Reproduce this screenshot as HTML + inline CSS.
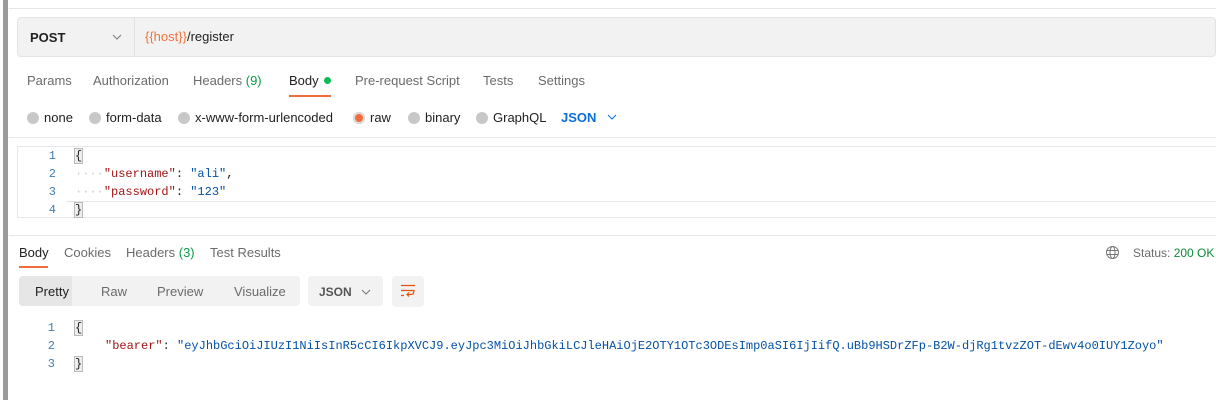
<!DOCTYPE html>
<html><head><meta charset="utf-8"><style>
*{margin:0;padding:0;box-sizing:border-box}
body{width:1216px;height:400px;background:#fff;font-family:"Liberation Sans",sans-serif;font-size:13px;color:#212121;position:relative;overflow:hidden}
.abs{position:absolute;white-space:nowrap}
.g{color:#6b6b6b}
.mono{font-family:"Liberation Mono",monospace;font-size:12px}
.ln{color:#3f7fb0;width:20px;text-align:right}
.k{color:#a31515}.s{color:#0451a5}
.dot{display:inline-block;width:12px;height:12px;border-radius:50%;background:#c8c8c8;vertical-align:-2px;margin-right:5px}
</style></head><body>
<div class="abs" style="left:3px;top:0;width:5px;height:400px;background:#9a9a9a"></div>
<div class="abs" style="left:9px;top:8px;width:1207px;height:1px;background:#e6e6e6"></div>
<div class="abs" style="left:17px;top:17px;width:1199px;height:40px;background:#f2f2f2;border:1px solid #e4e4e4;border-radius:4px"></div>
<div class="abs" style="left:134px;top:18px;width:1px;height:38px;background:#e0e0e0"></div>
<div class="abs" style="left:30px;top:30px;font-weight:bold;font-size:13px">POST</div>
<svg class="abs" style="left:112px;top:33px" width="10" height="8"><path d="M1 2l4 4 4-4" stroke="#777" fill="none"/></svg>
<div class="abs" style="left:145px;top:29px"><span style="color:#f0743e">{{host}}</span>/register</div>

<div class="abs g" style="left:27px;top:73px">Params</div>
<div class="abs g" style="left:93px;top:73px">Authorization</div>
<div class="abs g" style="left:193px;top:73px">Headers <span style="color:#0a9b4a">(9)</span></div>
<div class="abs" style="left:289px;top:73px">Body <span style="display:inline-block;width:7px;height:7px;border-radius:50%;background:#0cbb52;vertical-align:1px;margin-left:2px"></span></div>
<div class="abs" style="left:289px;top:95px;width:42px;height:2px;background:#f26b3a"></div>
<div class="abs g" style="left:355px;top:73px">Pre-request Script</div>
<div class="abs g" style="left:483px;top:73px">Tests</div>
<div class="abs g" style="left:538px;top:73px">Settings</div>

<div class="abs" style="left:27px;top:110px"><span class="dot"></span>none</div>
<div class="abs" style="left:89px;top:110px"><span class="dot"></span>form-data</div>
<div class="abs" style="left:178px;top:110px"><span class="dot"></span>x-www-form-urlencoded</div>
<div class="abs" style="left:353px;top:110px"><span class="dot" style="background:#f26b3a;box-shadow:0 0 0 2px #ddd inset"></span>raw</div>
<div class="abs" style="left:408px;top:110px"><span class="dot"></span>binary</div>
<div class="abs" style="left:476px;top:110px"><span class="dot"></span>GraphQL</div>
<div class="abs" style="left:561px;top:110px;color:#0b6ed6;font-weight:bold">JSON</div>
<svg class="abs" style="left:607px;top:113px" width="10" height="8"><path d="M1 2l4 4 4-4" stroke="#0b6ed6" fill="none"/></svg>
<div class="abs" style="left:9px;top:137px;width:1207px;height:1px;background:#e6e6e6"></div>

<div class="abs" style="left:17px;top:146px;width:1199px;height:72px;border:1px solid #e6e6e6;border-right:none"></div>
<div class="abs" style="left:66px;top:201px;width:1150px;height:1px;background:#e6e6e6"></div>
<div class="abs mono ln" style="left:36px;top:149px">1</div>
<div class="abs mono ln" style="left:36px;top:167px">2</div>
<div class="abs mono ln" style="left:36px;top:185px">3</div>
<div class="abs mono ln" style="left:36px;top:203px">4</div>
<div class="abs mono" style="left:75px;top:149px;background:#eee;outline:1px solid #bbb">{</div>
<div class="abs mono" style="left:75px;top:167px"><span style="color:#ccc">····</span><span class="k">"username"</span>: <span class="s">"ali"</span>,</div>
<div class="abs mono" style="left:75px;top:185px"><span style="color:#ccc">····</span><span class="k">"password"</span>: <span class="s">"123"</span></div>
<div class="abs mono" style="left:75px;top:203px;background:#eee;outline:1px solid #bbb">}</div>

<div class="abs" style="left:9px;top:235px;width:1207px;height:1px;background:#e6e6e6"></div>
<div class="abs" style="left:19px;top:245px">Body</div>
<div class="abs" style="left:19px;top:266px;width:29px;height:2px;background:#f26b3a"></div>
<div class="abs g" style="left:64px;top:245px">Cookies</div>
<div class="abs g" style="left:126px;top:245px">Headers <span style="color:#0a9b4a">(3)</span></div>
<div class="abs g" style="left:210px;top:245px">Test Results</div>
<svg class="abs" style="left:1105px;top:245px" width="15" height="15" fill="none" stroke="#777"><circle cx="7.5" cy="7.5" r="6"/><ellipse cx="7.5" cy="7.5" rx="2.5" ry="6"/><path d="M1.5 5.5h12M1.5 9.5h12"/></svg>
<div class="abs" style="left:1133px;top:246px;font-size:12px;color:#6b6b6b">Status: <span style="color:#0a8a3a">200 OK</span></div>

<div class="abs" style="left:19px;top:276px;width:281px;height:30px;background:#f2f2f2;border-radius:4px"></div>
<div class="abs" style="left:19px;top:276px;width:53px;height:30px;background:#e6e6e6;border-radius:4px 0 0 4px"></div>
<div class="abs" style="left:35px;top:284px">Pretty</div>
<div class="abs g" style="left:101px;top:284px">Raw</div>
<div class="abs g" style="left:157px;top:284px">Preview</div>
<div class="abs g" style="left:234px;top:284px">Visualize</div>
<div class="abs" style="left:308px;top:276px;width:75px;height:30px;background:#f2f2f2;border-radius:4px"></div>
<div class="abs" style="left:319px;top:285px;font-weight:bold;font-size:12px;color:#555">JSON</div>
<svg class="abs" style="left:361px;top:288px" width="10" height="8"><path d="M1 2l4 4 4-4" stroke="#777" fill="none"/></svg>
<div class="abs" style="left:392px;top:276px;width:32px;height:31px;background:#f2f2f2;border-radius:4px"></div>
<svg class="abs" style="left:400px;top:284px" width="16" height="16" fill="none" stroke="#e8500f" stroke-width="1.2"><path d="M1 1.5h14M1 6.5h13a0 0 0 0 1 0 0v0c0 3-1 4-3 4H7M9 8.5l-2 2 2 2M1 11.5h3"/></svg>

<div class="abs mono ln" style="left:35px;top:321px">1</div>
<div class="abs mono ln" style="left:35px;top:339px">2</div>
<div class="abs mono ln" style="left:35px;top:357px">3</div>
<div class="abs mono" style="left:75px;top:321px;background:#eee;outline:1px solid #bbb">{</div>
<div class="abs mono" style="left:105px;top:339px"><span class="k">"bearer"</span>: <span class="s">"eyJhbGciOiJIUzI1NiIsInR5cCI6IkpXVCJ9.eyJpc3MiOiJhbGkiLCJleHAiOjE2OTY1OTc3ODEsImp0aSI6IjIifQ.uBb9HSDrZFp-B2W-djRg1tvzZOT-dEwv4o0IUY1Zoyo"</span></div>
<div class="abs mono" style="left:75px;top:357px;background:#eee;outline:1px solid #bbb">}</div>
</body></html>
